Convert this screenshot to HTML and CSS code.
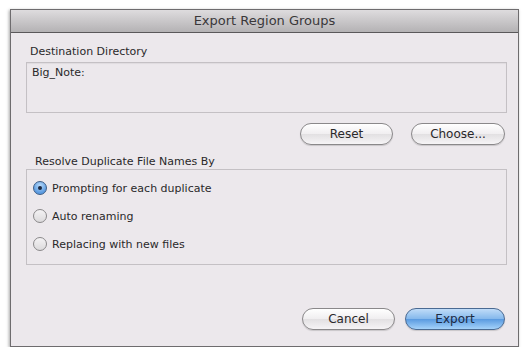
FILE: index.html
```html
<!DOCTYPE html>
<html lang="en">
<head>
  <meta charset="UTF-8" />
  <title>Export Region Groups</title>
  <link rel="stylesheet" href="styles.css">
</head>
<body>

<div class="window">
  <div class="titlebar">Export Region Groups</div>
  <div class="content">
    <div class="label">Destination Directory</div>
    <div class="field">Big_Note:</div>

    <div class="button-row">
      <button class="btn btn-reset">Reset</button>
      <button class="btn btn-choose">Choose...</button>
    </div>

    <div class="label label-resolve">Resolve Duplicate File Names By</div>
    <div class="group">
      <label class="radio"><span class="dot checked"></span>Prompting for each duplicate</label>
      <label class="radio"><span class="dot"></span>Auto renaming</label>
      <label class="radio"><span class="dot"></span>Replacing with new files</label>
    </div>

    <div class="button-row footer">
      <button class="btn btn-cancel">Cancel</button>
      <button class="btn btn-export">Export</button>
    </div>
  </div>
</div>

</body>
</html>
```

FILE: styles.css
```css
body {
  margin: 0;
  background: #ffffff;
  font-family: "DejaVu Sans", Verdana, sans-serif;
  color: #2a282a;
}
.window {
  margin: 9px 0 0 10px;
  width: 507px;
  height: 336px;
  border: 1px solid #6e6c6e;
  background: #ece8ec;
  box-shadow: 0 2px 0 #2e2c2e, -1px 1px 3px rgba(0,0,0,0.35);
  display: flex;
  flex-direction: column;
}
.titlebar {
  height: 22px;
  line-height: 22px;
  border-bottom: 1px solid #5a585a;
  background: linear-gradient(#dedcde, #b4b2b4);
  text-align: center;
  font-size: 13px;
  color: #3a383a;
}
.content {
  padding: 12px 11px 0 15px;
  display: flex;
  flex-direction: column;
}
.label {
  font-size: 11px;
  line-height: 14px;
  padding-left: 4px;
}
.field {
  margin-top: 3px;
  height: 51px;
  border: 1px solid #c4c0c4;
  box-shadow: inset 0 1px 1px rgba(0,0,0,0.06);
  font-size: 11px;
  padding: 3px 5px;
  box-sizing: border-box;
}
.button-row {
  display: flex;
  justify-content: flex-end;
  margin-top: 10px;
  margin-right: 2px;
  gap: 18px;
}
.btn {
  height: 22px;
  border: 1px solid #8a888a;
  border-radius: 11px;
  background: linear-gradient(#ffffff, #f0eef0 50%, #e2e0e2 51%, #f6f4f6);
  box-shadow: 0 1px 1px rgba(0,0,0,0.15);
  font-family: "DejaVu Sans", Verdana, sans-serif;
  font-size: 12px;
  color: #2a282a;
  padding: 0;
}
.btn-reset, .btn-cancel {
  width: 93px;
}
.btn-choose {
  width: 94px;
}
.btn-export {
  width: 100px;
  border-color: #4a6a92;
  background: linear-gradient(#c0dcf8, #84b8ec 50%, #5a9ae0 51%, #a4d2fa);
  color: #1c2a44;
}
.label-resolve {
  margin-top: 10px;
  padding-left: 9px;
}
.group {
  height: 96px;
  border: 1px solid #c4c0c4;
  box-sizing: border-box;
  padding: 11px 0 0 6px;
  display: flex;
  flex-direction: column;
  gap: 14px;
}
.radio {
  display: flex;
  align-items: center;
  height: 14px;
  font-size: 11px;
}
.dot {
  width: 12px;
  height: 12px;
  border-radius: 50%;
  border: 1px solid #8a888a;
  background: linear-gradient(#f4f2f4, #dcdadc);
  margin-right: 5px;
  display: flex;
  align-items: center;
  justify-content: center;
}
.dot.checked {
  border-color: #3c5c86;
  background: radial-gradient(circle at 50% 30%, #b8dafa, #5a9ae0 70%);
}
.dot.checked::after {
  content: "";
  width: 4px;
  height: 4px;
  border-radius: 50%;
  background: #1c2840;
}
.footer {
  margin-top: 43px;
  gap: 10px;
}
```
